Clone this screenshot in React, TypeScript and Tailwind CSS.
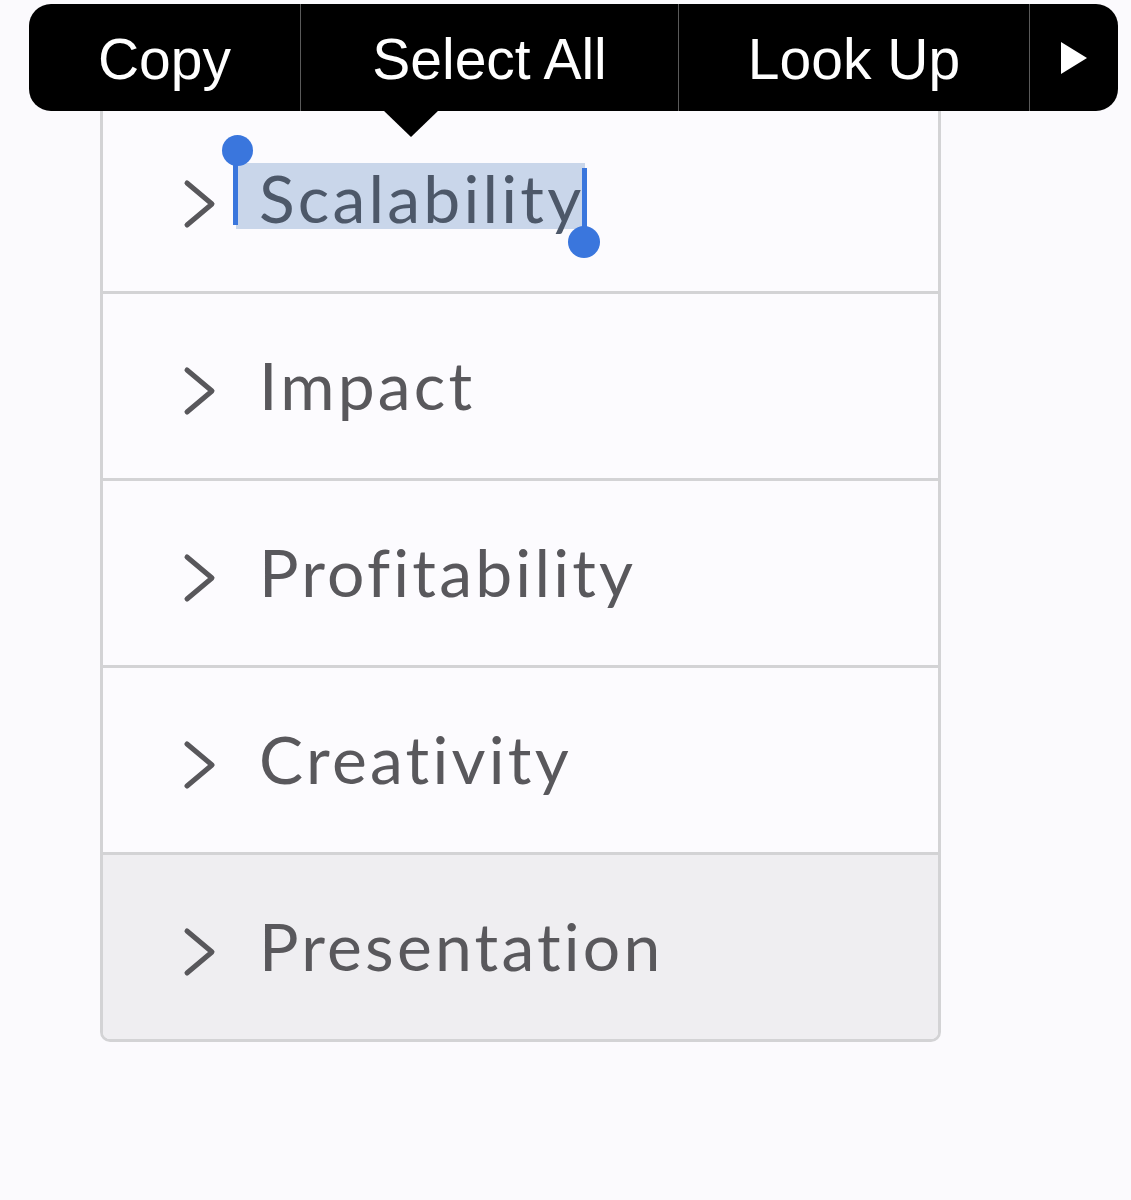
import React from "react";

const rows = ["Scalability", "Impact", "Profitability", "Creativity", "Presentation"];

function Chevron() {
  return (
    <svg width="34" height="50" viewBox="0 0 34 50" className="shrink-0 mt-[10px]">
      <path d="M4 4 L29 25 L4 46" fill="none" stroke="#58575b" strokeWidth="5" strokeLinecap="round" strokeLinejoin="round" />
    </svg>
  );
}

function SelectionMarks() {
  return (
    <>
      <div className="absolute left-[133px] top-[56px] w-[349px] h-[66px] bg-[#c9d6ea]" />
      <div className="absolute left-[130px] top-[43px] w-[5px] h-[75px] bg-[#3a76dd]" />
      <div className="absolute left-[119px] top-[28px] w-[31px] h-[31px] rounded-full bg-[#3a76dd]" />
      <div className="absolute left-[479px] top-[61px] w-[5px] h-[74px] bg-[#3a76dd]" />
      <div className="absolute left-[465px] top-[119px] w-[32px] h-[32px] rounded-full bg-[#3a76dd]" />
    </>
  );
}

export default function App() {
  return (
    <div className="relative min-h-[1200px] w-full bg-[#fbfafd]" style={{ fontFamily: "Lato, 'Open Sans', sans-serif" }}>
      <div className="pt-[104px] pl-[100px]">
        <div className="w-[841px] border-[3px] border-[#d3d3d5] rounded-b-[10px] overflow-hidden bg-[#fcfbfe]">
          {rows.map((r, i) => {
            const last = i === rows.length - 1;
            return (
              <div
                key={r}
                className={`relative flex items-center pl-[80px] ${last ? "h-[184px] bg-[#efeef1]" : "h-[187px] border-b-[3px] border-[#d3d3d5]"}`}
              >
                <Chevron />
                {i === 0 && <SelectionMarks />}
                <span
                  className={`relative ml-[42px] mb-[3px] text-[66px] leading-none tracking-[3.2px] [font-variant-ligatures:none] ${i === 0 ? "text-[#4d5869]" : "text-[#59585c]"}`}
                >
                  {r}
                </span>
              </div>
            );
          })}
        </div>
      </div>

      <div
        className="absolute left-[29px] top-[4px] h-[107px] flex items-stretch bg-black rounded-[22px] text-white text-[57px]"
        style={{ fontFamily: "'Liberation Sans', Arial, sans-serif" }}
      >
        <div className="flex items-center pt-[5px] w-[272px] justify-center border-r-[1.5px] border-[#5a5a5a]">Copy</div>
        <div className="flex items-center pt-[5px] w-[378px] justify-center border-r-[1.5px] border-[#5a5a5a]">Select All</div>
        <div className="flex items-center pt-[5px] w-[351px] justify-center border-r-[1.5px] border-[#5a5a5a]">Look Up</div>
        <div className="flex items-center w-[88px] justify-center">
          <svg width="28" height="34" viewBox="0 0 28 34">
            <path d="M1 1 L27 17 L1 33 Z" fill="white" />
          </svg>
        </div>
        <svg className="absolute left-[354px] top-[106px]" width="56" height="28" viewBox="0 0 56 28">
          <path d="M0 0 L56 0 L28 27 Z" fill="black" />
        </svg>
      </div>
    </div>
  );
}
